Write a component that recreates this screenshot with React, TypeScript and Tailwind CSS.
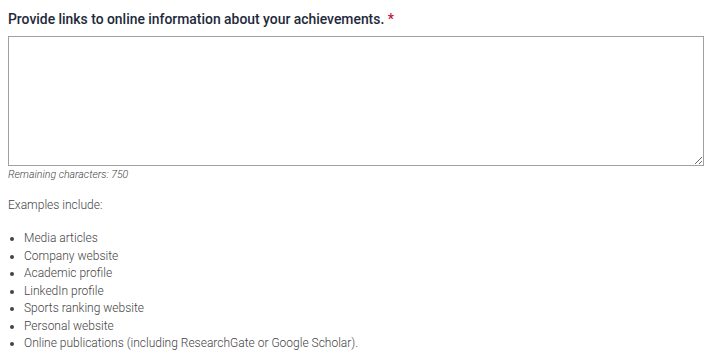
export default function App() {
  return (
    <div className="bg-white w-[714px] h-[364px] px-2 pt-[9px]" style={{ fontFamily: "Roboto, 'Liberation Sans', sans-serif" }}>
      <div className="text-[13.9px] leading-[20px] font-medium text-[#1e2a3b]">
        Provide links to online information about your achievements. <span className="text-[#c8102e]">*</span>
      </div>
      <textarea className="mt-[7px] block w-[696px] h-[130px] border border-[#a0a0a0] bg-white resize-y outline-none" />
      <div className="mt-[1px] text-[10.6px] leading-[15px] italic font-light text-[#444]">Remaining characters: 750</div>
      <div className="mt-[15px] text-[12px] leading-[16px] font-light text-[#444]">Examples include:</div>
      <ul className="mt-[17px] text-[12px] leading-[17.5px] font-light text-[#444] list-disc pl-[16px]">
        <li>Media articles</li>
        <li>Company website</li>
        <li>Academic profile</li>
        <li>LinkedIn profile</li>
        <li>Sports ranking website</li>
        <li>Personal website</li>
        <li>Online publications (including ResearchGate or Google Scholar).</li>
      </ul>
    </div>
  );
}
